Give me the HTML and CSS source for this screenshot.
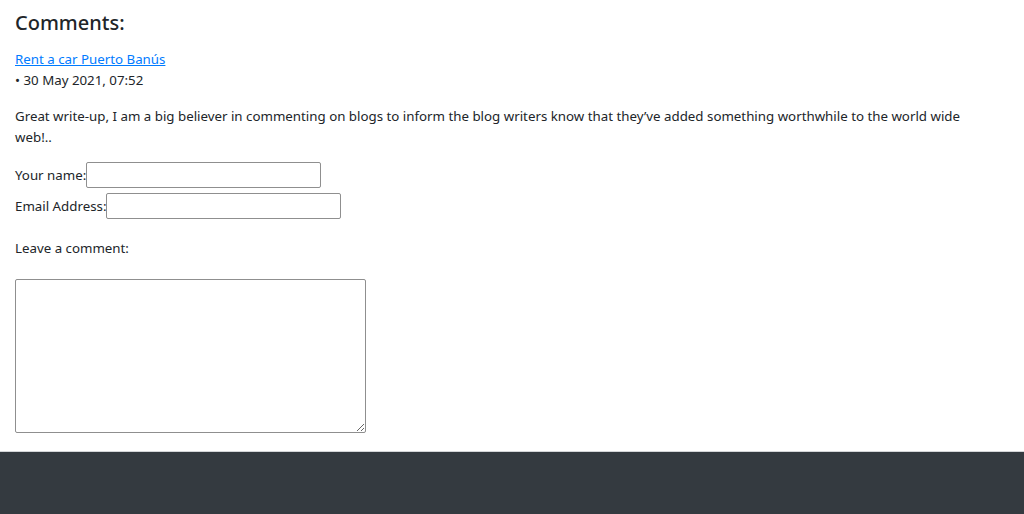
FILE: index.html
```html
<!DOCTYPE html>
<html lang="en">
<head>
    <meta charset="UTF-8">
    <meta name="viewport" content="width=device-width, initial-scale=1.0">
    <title>Comments</title>
    <link rel="stylesheet" href="styles.css">
</head>
<body>
    <div class="container">
        <h3>Comments:</h3>

        <div class="comment">
            <a href="#">Rent a car Puerto Banús</a>
            <div class="comment-date">&bull; 30 May 2021, 07:52</div>
            <p>Great write-up, I am a big believer in commenting on blogs to inform the blog writers know that they’ve added something worthwhile to the world wide web!..</p>
        </div>

        <form class="comment-form">
            <div class="form-row">
                <label for="name">Your name:</label><input type="text" id="name">
            </div>
            <div class="form-row">
                <label for="email">Email Address:</label><input type="text" id="email">
            </div>
            <p class="leave">Leave a comment:</p>
            <textarea id="comment"></textarea>
        </form>
    </div>

    <footer class="footer"></footer>
</body>
</html>
```

FILE: styles.css
```css
body {
    font-family: "Noto Sans", Arial, sans-serif;
    font-size: 13.3px;
    line-height: 21px;
    color: #212529;
    background-color: #fff;
    margin: 0;
}

.container {
    padding: 10px 15px 0 15px;
}

h3 {
    font-size: 20px;
    font-weight: 500;
    line-height: 26px;
    margin: 0 0 13px 0;
}

a {
    color: #007bff;
}

.comment p {
    max-width: 975px;
    margin: 15px 0 14px 0;
}

.form-row {
    display: flex;
    align-items: center;
    margin-bottom: 5px;
}

.form-row input {
    width: 235px;
    height: 26px;
    box-sizing: border-box;
    border: 1px solid #8f8f8f;
    border-radius: 2px;
    padding: 1px 2px;
    font-family: inherit;
}

.leave {
    margin: 19px 0 20px 0;
}

textarea {
    display: block;
    width: 351px;
    height: 154px;
    box-sizing: border-box;
    border: 1px solid #8f8f8f;
    border-radius: 2px;
    margin: 0;
}

.footer {
    margin-top: 18px;
    height: 62px;
    background-color: #343a40;
    border-top: 1px solid #d3d5d8;
}
```
